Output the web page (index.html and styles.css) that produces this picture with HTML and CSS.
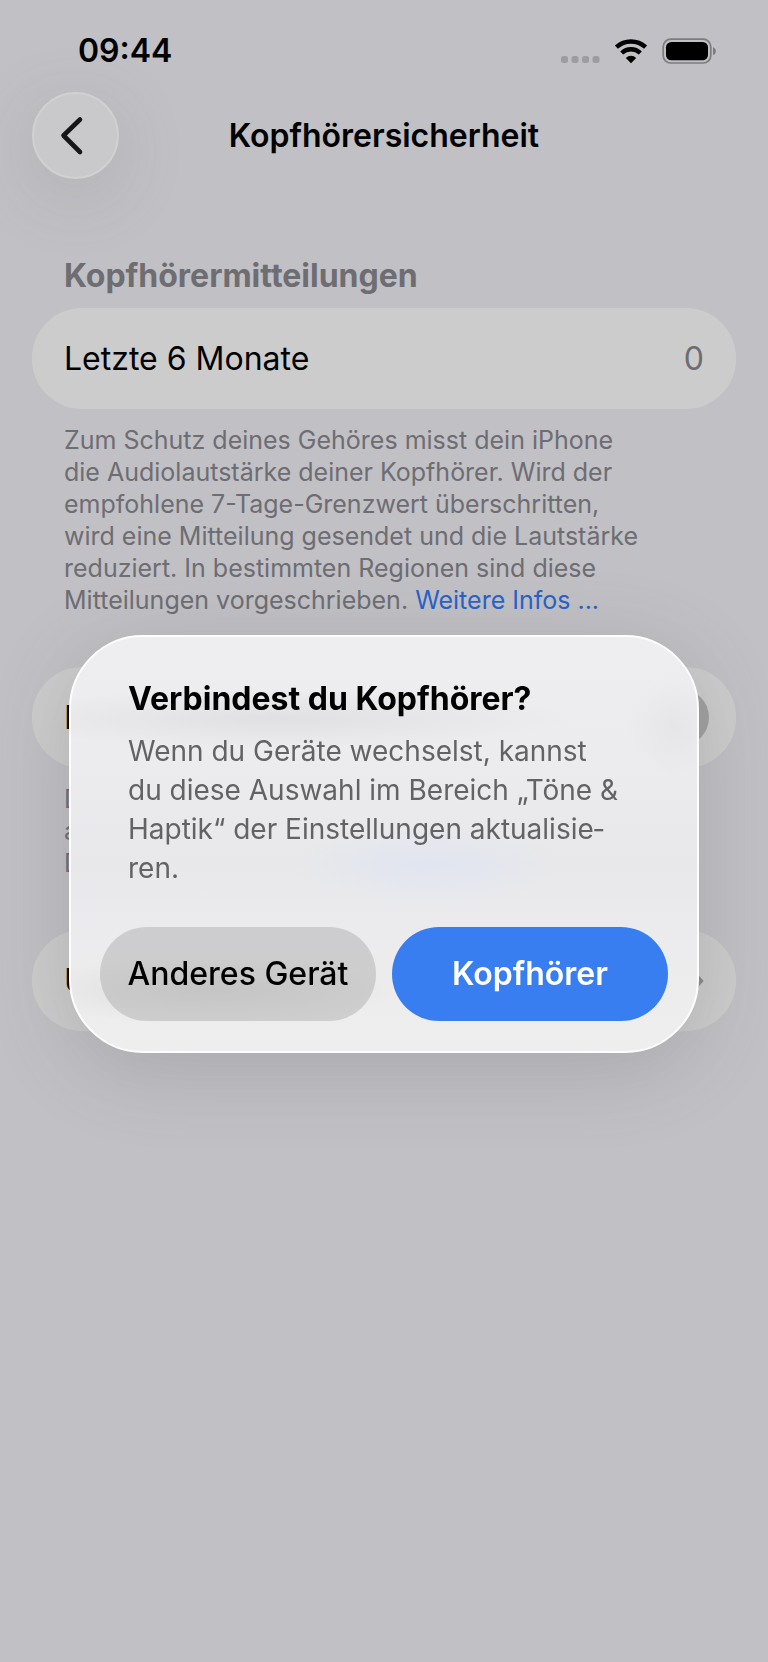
FILE: index.html
```html
<!DOCTYPE html>
<html lang="de">
<head>
  <meta charset="UTF-8">
  <meta name="viewport" content="width=device-width, initial-scale=1.0">
  <title>Kopfhörersicherheit</title>
  <link rel="stylesheet" href="styles.css">
</head>
<body>
  <div class="statusbar">
    <span class="time">09:44</span>
    <div class="status-icons">
      <svg class="dots" viewBox="0 0 40 26" width="40" height="26" aria-hidden="true">
        <rect x="1" y="18" width="7" height="7" rx="2.5"/>
        <rect x="11.5" y="18" width="7" height="7" rx="2.5"/>
        <rect x="22" y="18" width="7" height="7" rx="2.5"/>
        <rect x="32.5" y="18" width="7" height="7" rx="2.5"/>
      </svg>
      <svg class="wifi" viewBox="0 0 34 26" width="34" height="26" aria-hidden="true">
        <path d="M2.4 9.2a21.5 21.5 0 0 1 29.2 0M7.7 15a13.6 13.6 0 0 1 18.6 0" fill="none" stroke="#000" stroke-width="4.4"/>
        <path d="M17 25.2l-5.2-5.3a7.6 7.6 0 0 1 10.4 0z"/>
      </svg>
      <svg class="battery" viewBox="0 0 56 26" width="56" height="26" aria-hidden="true">
        <rect x="1.2" y="1.2" width="47.6" height="23.8" rx="7.6" fill="none" stroke="#7c7c7f" stroke-width="1.7"/>
        <rect x="4" y="4" width="42" height="18.2" rx="5.2"/>
        <path d="M51 9.2c3.8 1.2 3.8 6.6 0 7.8z" fill="#7c7c7f"/>
      </svg>
    </div>
  </div>

  <header class="navbar">
    <button class="back" aria-label="Zurück">
      <svg viewBox="0 0 24 40" width="24" height="40" aria-hidden="true">
        <path d="M20 3.5L3.5 19.5L20 36" fill="none" stroke="#161618" stroke-width="4.6" stroke-linecap="round" stroke-linejoin="round"/>
      </svg>
    </button>
    <h1>Kopfhörersicherheit</h1>
  </header>

  <main class="content">
    <section class="group">
      <h2>Kopfhörermitteilungen</h2>
      <div class="row">
        <span>Letzte 6 Monate</span>
        <span class="value">0</span>
      </div>
      <p class="note">Zum Schutz deines Gehöres misst dein iPhone die Audiolautstärke deiner Kopfhörer. Wird der empfohlene 7-Tage-Grenzwert überschritten, wird eine Mitteilung gesendet und die Lautstärke reduziert. In bestimmten Regionen sind diese Mitteilungen vorgeschrieben. <a href="#">Weitere Infos ...</a></p>
    </section>

    <section class="group">
      <label class="row">
        <span>Laut</span>
        <input class="switch" type="checkbox">
      </label>
      <p class="note">Dein<br>alle<br>Dein</p>
    </section>

    <section class="group">
      <a class="row" href="#">
        <span>Um</span>
        <svg viewBox="0 0 14 24" width="14" height="24" aria-hidden="true">
          <path d="M2 2l9 10L2 22" fill="none" stroke="#88888b" stroke-width="4"/>
        </svg>
      </a>
    </section>
  </main>

  <div class="overlay">
    <div class="alert" role="alertdialog" aria-labelledby="alert-title" aria-describedby="alert-text">
      <h3 id="alert-title">Verbindest du Kopfhörer?</h3>
      <p id="alert-text">Wenn du Geräte wechselst, kannst du diese Auswahl im Bereich „Töne &amp; Haptik“ der Einstellungen aktualisie&shy;ren.</p>
      <div class="actions">
        <button>Anderes Gerät</button>
        <button class="primary">Kopfhörer</button>
      </div>
    </div>
  </div>
</body>
</html>
```
FILE: styles.css
```css
:root {
  --bg: #c1c0c5;
  --card: #cccccc;
  --muted: #6d6d72;
  --link: #2862c8;
  --accent: #387ef0;
}
* {
  box-sizing: border-box;
}
body {
  margin: 0;
  min-height: 100vh;
  font-family: Inter, "Liberation Sans", sans-serif;
  font-size: 32px;
  line-height: 40px;
  background: var(--bg);
  color: #000;
}
h1, h2, h3, p {
  margin: 0;
}
button {
  font: inherit;
  border: none;
}
a {
  color: var(--link);
  text-decoration: none;
}

/* status bar */
.statusbar {
  display: flex;
  align-items: center;
  justify-content: space-between;
  height: 92px;
  padding: 10px 50px 0 78px;
}
.time {
  font-weight: 600;
}
.status-icons {
  display: flex;
  gap: 14px;
}
.dots {
  fill: #9d9da1;
}

/* navigation */
.navbar {
  display: grid;
  grid-template-columns: 88px 1fr 88px;
  align-items: center;
  padding: 0 32px;
}
.navbar h1 {
  font-size: 32px;
  font-weight: 600;
  text-align: center;
}
.back {
  display: flex;
  align-items: center;
  justify-content: center;
  width: 87px;
  height: 87px;
  padding: 0 8px 0 0;
  border: 2px solid #d1d1d3;
  border-radius: 50%;
  background: #c9c9cb;
  box-shadow: 0 16px 70px rgba(110, 110, 100, 0.2);
}

/* settings list */
.content {
  padding: 77px 32px 0;
}
.group {
  margin-bottom: 51px;
}
.group h2 {
  padding: 0 32px;
  margin-bottom: 12px;
  font-size: 32px;
  font-weight: 700;
  color: var(--muted);
}
.row {
  display: flex;
  align-items: center;
  justify-content: space-between;
  height: 101px;
  padding: 0 32px;
  border-radius: 50px;
  background: var(--card);
  color: #000;
}
.value {
  color: var(--muted);
}
.note {
  padding: 15px 80px 0 32px;
  font-size: 25px;
  line-height: 32px;
  color: var(--muted);
}
.switch {
  appearance: none;
  display: flex;
  justify-content: flex-start;
  width: 128px;
  height: 57px;
  margin: 0 -5px 0 0;
  padding: 4px;
  border-radius: 29px;
  background: #a0a0a1;
}
.switch::before {
  content: "";
  width: 76px;
  border-radius: 25px;
  background: #dcdcdc;
}

/* alert */
.overlay {
  position: fixed;
  inset: 0;
  display: grid;
  place-items: center;
  padding: 26px 69px 0;
}
.alert {
  width: 100%;
  padding: 42px 29px 30px;
  border: 2px solid #fdfdfd;
  border-radius: 74px;
  background:
    radial-gradient(ellipse 290px 30px at 33% 20%, rgba(150, 150, 150, 0.14), transparent),
    radial-gradient(ellipse 46px 50px at 96% 22%, rgba(150, 150, 155, 0.08), transparent),
    radial-gradient(ellipse 130px 40px at 57% 55%, rgba(205, 222, 255, 0.3), transparent),
    radial-gradient(ellipse 190px 34px at 22% 85%, rgba(120, 120, 120, 0.13), transparent),
    linear-gradient(#eeeef0, #ececee 30%, #e8e8eb 55%, #ececee 75%, #eeeeee);
  background-origin: border-box;
  box-shadow: 0 16px 80px rgba(90, 90, 90, 0.24);
}
.alert h3 {
  padding: 0 28px;
  margin-bottom: 13px;
  font-size: 32px;
  font-weight: 700;
}
.alert p {
  padding: 0 46px 0 28px;
  font-size: 28px;
  line-height: 39px;
  color: #636366;
}
.actions {
  display: grid;
  grid-template-columns: 1fr 1fr;
  gap: 16px;
  margin-top: 39px;
}
.actions button {
  height: 94px;
  padding: 0;
  border-radius: 47px;
  background: rgba(160, 160, 160, 0.4);
  color: #000;
  font-weight: 500;
}
.actions .primary {
  background: var(--accent);
  color: #fff;
  font-weight: 600;
}
```
